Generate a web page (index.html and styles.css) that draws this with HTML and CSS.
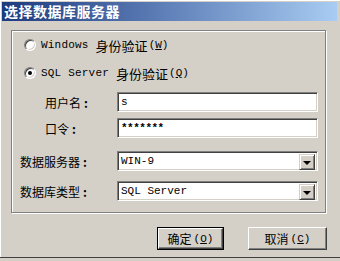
FILE: index.html
```html
<!DOCTYPE html>
<html>
<head>
<meta charset="utf-8">
<link rel="stylesheet" href="styles.css">
</head>
<body>
<div class="frame">
  <div class="titlebar">选择数据库服务器</div>
  <div class="content">
    <div class="group">
      <div class="radio-row first">
        <span class="radio"></span>
        <span class="rtext"><span class="lat">Windows</span><span class="cn">身份验证</span><span class="key">(<u>W</u>)</span></span>
      </div>
      <div class="radio-row second">
        <span class="radio checked"></span>
        <span class="rtext"><span class="lat">SQL Server</span><span class="cn">身份验证</span><span class="key">(<u>Q</u>)</span></span>
      </div>
      <div class="field f1">
        <span class="label indent">用户名<span class="colon">:</span></span>
        <div class="input"><span class="lat">s</span></div>
      </div>
      <div class="field f2">
        <span class="label indent">口令<span class="colon">:</span></span>
        <div class="input"><span class="lat pw">*******</span></div>
      </div>
      <div class="field f3">
        <span class="label">数据服务器<span class="colon">:</span></span>
        <div class="input select"><span class="lat">WIN-9</span><span class="drop"><span class="arrow"></span></span></div>
      </div>
      <div class="field f4">
        <span class="label">数据库类型<span class="colon">:</span></span>
        <div class="input select"><span class="lat">SQL Server</span><span class="drop"><span class="arrow"></span></span></div>
      </div>
    </div>
    <div class="buttons">
      <div class="btn default"><span class="btn-in">确定<span class="key">(<u>O</u>)</span></span></div>
      <div class="btn cancel"><span class="btn-in">取消<span class="key">(<u>C</u>)</span></span></div>
    </div>
  </div>
</div>
</body>
</html>
```
FILE: styles.css
```css
html, body {
  margin: 0;
  padding: 0;
  background: #d4d0c8;
}
body {
  width: 340px;
  height: 261px;
  overflow: hidden;
  font-family: "Noto Sans CJK SC", sans-serif;
  font-size: 12px;
  color: #000;
}
.frame {
  box-sizing: border-box;
  width: 340px;
  height: 258px;
  padding: 2px 3px 0 2px;
  background: #d4d0c8;
  border-bottom: 1px solid #404040;
  box-shadow: inset 1px 1px 0 #ffffff;
}
.titlebar {
  height: 19px;
  line-height: 19px;
  padding-left: 2px;
  background: linear-gradient(to right, #1c3a7e, #5a7ab4 45%, #a8ccf2);
  color: #fff;
  font-weight: bold;
  font-size: 14px;
  letter-spacing: 0.5px;
  white-space: nowrap;
}
.content {
  padding: 9px 0 0 9px;
}
.group {
  box-sizing: border-box;
  width: 315px;
  height: 183px;
  border: 1px solid #808080;
  box-shadow: inset 1px 1px 0 #fff, 1px 1px 0 #fff;
  padding-left: 12px;
  display: flex;
  flex-direction: column;
}
.lat {
  font-family: "Liberation Mono", "DejaVu Sans Mono", monospace;
  font-size: 11px;
}
.radio-row {
  display: flex;
  align-items: center;
  height: 16px;
}
.radio-row.first { margin-top: 6px; }
.radio-row.second { margin-top: 12px; }
.radio {
  box-sizing: border-box;
  width: 12px;
  height: 12px;
  border-radius: 50%;
  background: #fff;
  border: 1px solid;
  border-color: #808080 #ffffff #ffffff #808080;
  box-shadow: inset 1px 1px 0 #404040, inset -1px -1px 0 #d4d0c8;
  position: relative;
  flex: none;
}
.radio.checked::after {
  content: "";
  position: absolute;
  left: 3px;
  top: 3px;
  width: 4px;
  height: 4px;
  border-radius: 50%;
  background: #000;
}
.rtext {
  margin-left: 5px;
  font-size: 13px;
  white-space: nowrap;
  display: flex;
  align-items: center;
}
.rtext .lat {
  letter-spacing: 0.2px;
}
.cn {
  margin-left: 7px;
}
.key {
  font-family: "Liberation Mono", monospace;
  font-size: 11px;
  margin-left: 1px;
}
.field {
  display: flex;
  align-items: center;
  height: 20px;
}
.f1 { margin-top: 11px; }
.f2 { margin-top: 6px; }
.f3 { margin-top: 13px; }
.f4 { margin-top: 10px; }
.label {
  width: 97px;
  margin-left: -4px;
  font-size: 12px;
  white-space: nowrap;
}
.label.indent {
  padding-left: 25px;
  width: 72px;
}
.colon {
  margin-left: 3px;
  font-weight: bold;
}
.input {
  box-sizing: border-box;
  width: 201px;
  height: 20px;
  background: #fff;
  border: 1px solid;
  border-color: #808080 #ffffff #ffffff #808080;
  box-shadow: inset 1px 1px 0 #404040, inset -1px -1px 0 #d4d0c8;
  padding: 0 3px;
  display: flex;
  align-items: center;
  position: relative;
}
.pw {
  letter-spacing: -0.5px;
  font-weight: bold;
}
.drop {
  position: absolute;
  right: 2px;
  top: 2px;
  width: 16px;
  height: 16px;
  box-sizing: border-box;
  background: #d4d0c8;
  border: 1px solid;
  border-color: #d4d0c8 #404040 #404040 #d4d0c8;
  box-shadow: inset 1px 1px 0 #fff, inset -1px -1px 0 #808080;
  display: flex;
  align-items: center;
  justify-content: center;
}
.arrow {
  width: 0;
  height: 0;
  border-left: 4px solid transparent;
  border-right: 4px solid transparent;
  border-top: 4px solid #000;
  margin-top: 1px;
}
.buttons {
  display: flex;
  margin-top: 14px;
  padding-left: 146px;
}
.btn {
  box-sizing: border-box;
  height: 23px;
  display: flex;
}
.btn-in {
  flex: 1;
  display: flex;
  align-items: center;
  justify-content: center;
  background: #d4d0c8;
  border: 1px solid;
  border-color: #fff #404040 #404040 #fff;
  box-shadow: inset -1px -1px 0 #808080;
  font-size: 12px;
  white-space: nowrap;
}
.btn-in .key {
  margin-left: 2px;
}
.btn.default {
  width: 67px;
  border: 1px solid #000;
}
.btn.cancel {
  width: 79px;
  margin-left: 24px;
}
```
